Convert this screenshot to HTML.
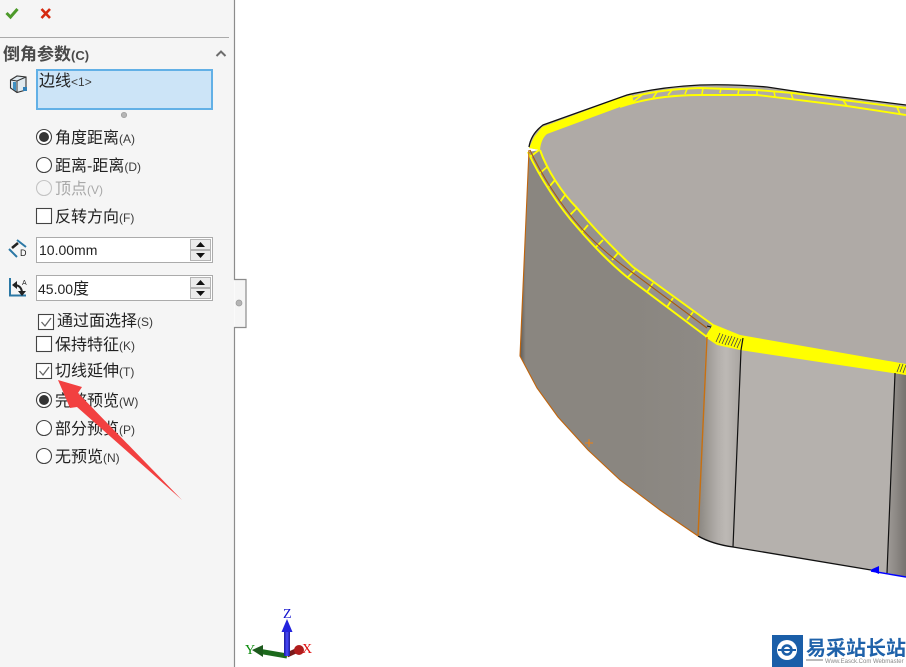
<!DOCTYPE html>
<html lang="zh"><head><meta charset="utf-8"><title>倒角参数</title>
<style>
html,body{margin:0;padding:0;background:#fff;width:906px;height:667px;overflow:hidden}
svg{display:block}
text{font-family:"Liberation Sans","Noto Sans CJK SC",sans-serif;fill:#222}
.l{font-size:16px}
.s{font-size:12px;fill:#3a3a3a}
</style></head><body>
<svg width="906" height="667" viewBox="0 0 906 667" xmlns="http://www.w3.org/2000/svg">
<defs>
<linearGradient id="fil1" x1="0" x2="1" y1="0" y2="0"><stop offset="0" stop-color="#8a8680"/><stop offset=".45" stop-color="#b2aeaa"/><stop offset=".65" stop-color="#bdb9b5"/><stop offset="1" stop-color="#a9a5a1"/></linearGradient>
<linearGradient id="fil2" x1="0" x2="1" y1="0" y2="0"><stop offset="0" stop-color="#a09c98"/><stop offset="1" stop-color="#77736f"/></linearGradient>
<linearGradient id="left" x1="0" x2="1" y1="0" y2="0"><stop offset="0" stop-color="#5d5a57"/><stop offset=".03" stop-color="#8a8680"/><stop offset=".6" stop-color="#8a8680"/><stop offset="1" stop-color="#8e8a85"/></linearGradient>
<linearGradient id="zb" x1="0" x2="1" y1="0" y2="0"><stop offset="0" stop-color="#1a1a9a"/><stop offset=".5" stop-color="#4a4aff"/><stop offset="1" stop-color="#1a1a9a"/></linearGradient>
</defs>

<!-- model -->
<path d="M529,150 L520,356 L537,388 L558,417 L588,450 L620,480 L660,510 L698,536 L708,337 L627,277 C610,263 595,248 577,227 C560,208 540,178 528,152 Z" fill="url(#left)"/>
<path d="M706,335 L698,536 Q712,544 733,547 L741,350 Z" fill="url(#fil1)"/>
<path d="M741,345 L733,547 L887,573 L895,372 Z" fill="#b5b1ad"/>
<path d="M895,372 L887,573 L906,577 L906,375 Z" fill="url(#fil2)"/>
<!-- top face -->
<path d="M529,148 Q530,136 543,125 L627,95 Q660,87 700,85 Q733,84 767,87 L800,92 L906,105 L906,366 L740,336 L713,325 L633,267 C615,250 595,230 577,208 C562,193 547,170 540,150 Z" fill="#afaaa6"/>
<!-- left chamfer fill -->
<path d="M528,152 C540,178 560,208 577,227 C595,248 610,263 627,277 L707,337 L713,325 L633,267 C615,250 595,230 577,208 C562,193 547,170 540,150 Z" fill="#96928d"/>
<!-- top chamfer solid yellow -->
<path d="M529,148 L534,137 L542,127 L620,98 L632,95 L634,103 L620,107 L547,134 Q541,139 540,150 Z" fill="#ffff00"/>
<!-- top chamfer lines -->
<path d="M628,98 Q660,89 700,88 L757,90 L793,93 L843,100 L906,108 M620,107 Q655,95 700,95 L757,95 L793,99.300 L847,106 L906,115" fill="none" stroke="#ff0" stroke-width="1.900"/>
<path d="M623,103 L630,98 M633,102 L642,95 M653,98 L657,92 M668,95 L672,90 M685,94 L687,89 M702,94 L703,88 M720,93 L721,88 M738,94 L739,89 M757,95 L757,90 M775,97 L774,91 M793,99 L791,93 M847,106 L843,100 M900,114 L897,107" stroke="#ff0" stroke-width="1.600" fill="none"/>
<path d="M529,147 Q531,134 543,125 L627,95 Q660,87 700,85 Q733,84 767,87 L800,92 L850,98 L906,105" fill="none" stroke="#111" stroke-width="1.300"/>
<!-- left chamfer lines -->
<path d="M528,152 C540,178 560,208 577,227 C595,248 610,263 627,277 L707,337 M540,150 C547,170 562,193 577,208 C595,230 615,250 633,267 L713,325" fill="none" stroke="#ff0" stroke-width="2"/>
<path d="M530,157 L539,150 M540,173 L547,167 M549,187 L555,180 M560,202 L565,195 M570,215 L577,208 M582,232 L588,225 M595,248 L603,240 M612,260 L618,253 M628,277 L635,270 M647,292 L653,283 M667,307 L673,298 M687,320 L693,312" stroke="#ff0" stroke-width="1.800" fill="none"/>
<path d="M530,150 C540,172 560,205 583,230 C600,248 615,260 633,273 L707,328" fill="none" stroke="#a85a10" stroke-width="1.100"/>
<path d="M707,326 L711,327 L709,333" fill="none" stroke="#111" stroke-width="1"/>
<!-- front yellow band -->
<path d="M713,324 L740,335 L906,364 L906,375 L740,350 L717,345 L705,337 Z" fill="#ffff00"/>
<path d="M716,342 L720,333 M719,343 L723,334 M722,344 L726,335 M725,345 L729,336 M728,345 L732,336 M731,346 L735,337 M734,347 L738,338 M737,348 L741,339 M897,372 L900,364 M900,372 L903,364 M903,373 L906,365" stroke="#444" stroke-width=".8" fill="none"/>
<!-- edges -->
<path d="M743,338 L741,350 L733,547 M895,373 L887,573" stroke="#111" stroke-width="1.200" fill="none"/>
<path d="M698,536 Q712,544 733,547 L871,570" stroke="#111" stroke-width="1.300" fill="none"/>
<path d="M871,571 L906,577" stroke="#00f" stroke-width="1.500" fill="none"/>
<path d="M870,570 L879,566 L879,574 Z" fill="#00f"/>
<path d="M529,150 L520,356 L537,388 L558,417 L588,450 L620,480 L660,510 L698,536" fill="none" stroke="#c0640c" stroke-width="1.100"/>
<path d="M707,337 L698,536" fill="none" stroke="#c87010" stroke-width="1.400"/>
<path d="M585,443 H593 M589,439 V447" stroke="#f08010" stroke-width="1"/>

<!-- triad -->
<path d="M287,656 L258,651" stroke="#1c6a1c" stroke-width="5"/>
<path d="M252,650 L263,645 L263,657 Z" fill="#1c5a1c"/>
<path d="M287,655 L298,650" stroke="#7a1a1a" stroke-width="5"/>
<circle cx="299" cy="650" r="5" fill="#b01c1c"/>
<rect x="284" y="628" width="6" height="28" fill="url(#zb)"/>
<path d="M287,619 L281.500,632 L292.500,632 Z" fill="#2222dd"/>
<text x="283" y="618" style="font-family:'Liberation Serif',serif;font-size:14px;fill:#11c">Z</text>
<text x="245" y="654" style="font-family:'Liberation Serif',serif;font-size:14px;fill:#0a8a0a">Y</text>
<text x="302" y="653" style="font-family:'Liberation Serif',serif;font-size:14px;fill:#e01010">X</text>

<!-- logo -->
<rect x="772" y="635" width="31" height="32" fill="#1a5ea8"/>
<circle cx="787" cy="650" r="10" fill="#fff"/>
<circle cx="787" cy="650" r="4.500" fill="none" stroke="#1a5ea8" stroke-width="2.500"/>
<path d="M778,650 H796" stroke="#1a5ea8" stroke-width="2"/>
<text x="806" y="655" style="font-size:20px;font-weight:bold;fill:#1f62aa">易采站长站</text>
<path d="M806,660 H823" stroke="#777" stroke-width="1"/>
<text x="825" y="663" style="font-size:6px;fill:#888">Www.Easck.Com Webmaster</text>

<!-- panel -->
<rect x="0" y="0" width="234" height="667" fill="#f5f5f5"/>
<path d="M234.500,0 V279.500 H246 V327.500 H234.500 V667" fill="#f5f5f5" stroke="#8c8c8c" stroke-width="1.200"/>
<circle cx="239" cy="303" r="3" fill="#b5b5b5" stroke="#999" stroke-width=".7"/>

<path d="M6.500,13 L10.500,17 L17.500,9" fill="none" stroke="#4d9a2a" stroke-width="3"/>
<path d="M41.500,9 L50,18 M50,9 L41.500,18" fill="none" stroke="#d52a10" stroke-width="2.600"/>
<path d="M0,37.500 H229" stroke="#aaa" stroke-width="1"/>

<text x="3" y="60" style="font-size:17px;font-weight:bold;fill:#4a4a4a">倒角参数<tspan style="font-size:13px;fill:#4a4a4a">(C)</tspan></text>
<path d="M216.500,56 L221,51.500 L225.500,56" fill="none" stroke="#6d6d6d" stroke-width="2"/>

<!-- selection icon -->
<path d="M10.500,80 L17,76 L26,77 V90 L17,92.500 L10.500,88 Z" fill="#dfe9ef" stroke="#333" stroke-width="1.100"/>
<path d="M17,81 V92 M10.500,80 L17,81 L26,77" fill="none" stroke="#333" stroke-width="1"/>
<path d="M13,82 L16,82 V91 L13,89 Z" fill="#3f8fc0"/>
<rect x="23" y="87" width="4" height="4" fill="#2f80b8"/>

<!-- list box -->
<rect x="37" y="70" width="175" height="39" fill="#cce4f7" stroke="#62b0e6" stroke-width="2"/>
<text x="39" y="86" class="l">边线<tspan class="s" style="font-size:12px">&lt;1&gt;</tspan></text>
<circle cx="124" cy="115" r="2.700" fill="#b5b5b5" stroke="#999" stroke-width=".7"/>

<!-- radios top -->
<circle cx="44" cy="137" r="7.500" fill="#fff" stroke="#444" stroke-width="1.100"/><circle cx="44" cy="137" r="5" fill="#333"/>
<text x="55" y="143" class="l">角度距离<tspan class="s">(A)</tspan></text>
<circle cx="44" cy="165" r="7.500" fill="#fff" stroke="#444" stroke-width="1.100"/>
<text x="55" y="171" class="l">距离-距离<tspan class="s">(D)</tspan></text>
<circle cx="44" cy="188" r="7.500" fill="#f5f5f5" stroke="#c4c4c4" stroke-width="1.100"/>
<text x="55" y="194" class="l" style="fill:#a8a8a8">顶点<tspan style="font-size:12px;fill:#a8a8a8">(V)</tspan></text>
<rect x="36.500" y="208.500" width="15" height="15" fill="#fff" stroke="#444" stroke-width="1.100"/>
<text x="55" y="222" class="l">反转方向<tspan class="s">(F)</tspan></text>

<!-- D input -->
<path d="M17,240 L26,247 M9,249 L17,257" stroke="#2b78a5" stroke-width="2" fill="none"/>
<path d="M12,248 L18,243" stroke="#222" stroke-width="2.600" fill="none"/>
<text x="20" y="256" style="font-size:9px;fill:#222">D</text>
<rect x="36.500" y="237.500" width="176" height="25" fill="#fff" stroke="#ababab"/>
<text x="39" y="255" style="font-size:14px;fill:#222">10.00mm</text>
<rect x="190.500" y="239.500" width="20" height="10" fill="#ececec" stroke="#b4b4b4"/><rect x="190.500" y="250.500" width="20" height="10" fill="#ececec" stroke="#b4b4b4"/>
<path d="M200.500,242 L205,247 H196 Z M196,253 H205 L200.500,258 Z" fill="#111"/>

<!-- A input -->
<path d="M10,278 V295.500 H26" fill="none" stroke="#2b78a5" stroke-width="2"/>
<path d="M14,285 Q21,285 22,292" fill="none" stroke="#222" stroke-width="2"/>
<path d="M12,285 L17,281 V289 Z M18,291 H26 L22,296 Z" fill="#222"/>
<text x="22" y="285" style="font-size:7px;fill:#222">A</text>
<rect x="36.500" y="275.500" width="176" height="25" fill="#fff" stroke="#ababab"/>
<text x="38" y="294" style="font-size:14px;fill:#222">45.00<tspan style="font-size:16px">度</tspan></text>
<rect x="190.500" y="277.500" width="20" height="10" fill="#ececec" stroke="#b4b4b4"/><rect x="190.500" y="288.500" width="20" height="10" fill="#ececec" stroke="#b4b4b4"/>
<path d="M200.500,280 L205,285 H196 Z M196,291 H205 L200.500,296 Z" fill="#111"/>

<!-- checks -->
<rect x="38.500" y="314.500" width="15" height="15" fill="#fff" stroke="#444" stroke-width="1.100"/>
<path d="M41.500,322 L45,326 L51,318" fill="none" stroke="#666" stroke-width="1.300"/>
<text x="57" y="326" class="l">通过面选择<tspan class="s">(S)</tspan></text>
<rect x="36.500" y="336.500" width="15" height="15" fill="#fff" stroke="#444" stroke-width="1.100"/>
<text x="55" y="350" class="l">保持特征<tspan class="s">(K)</tspan></text>
<rect x="36.500" y="363.500" width="15" height="15" fill="#fff" stroke="#444" stroke-width="1.100"/>
<path d="M39.500,371 L43,375 L49,367" fill="none" stroke="#666" stroke-width="1.300"/>
<text x="55" y="376" class="l">切线延伸<tspan class="s">(T)</tspan></text>

<circle cx="44" cy="400" r="7.500" fill="#fff" stroke="#444" stroke-width="1.100"/><circle cx="44" cy="400" r="5" fill="#333"/>
<text x="55" y="406" class="l">完整预览<tspan class="s">(W)</tspan></text>
<circle cx="44" cy="428" r="7.500" fill="#fff" stroke="#444" stroke-width="1.100"/>
<text x="55" y="434" class="l">部分预览<tspan class="s">(P)</tspan></text>
<circle cx="44" cy="456" r="7.500" fill="#fff" stroke="#444" stroke-width="1.100"/>
<text x="55" y="462" class="l">无预览<tspan class="s">(N)</tspan></text>

<!-- red arrow -->
<path d="M58,380 L82,387 L78,393 L182,500 L77,407 L70,408 Z" fill="#f24040"/>
</svg>
</body></html>
